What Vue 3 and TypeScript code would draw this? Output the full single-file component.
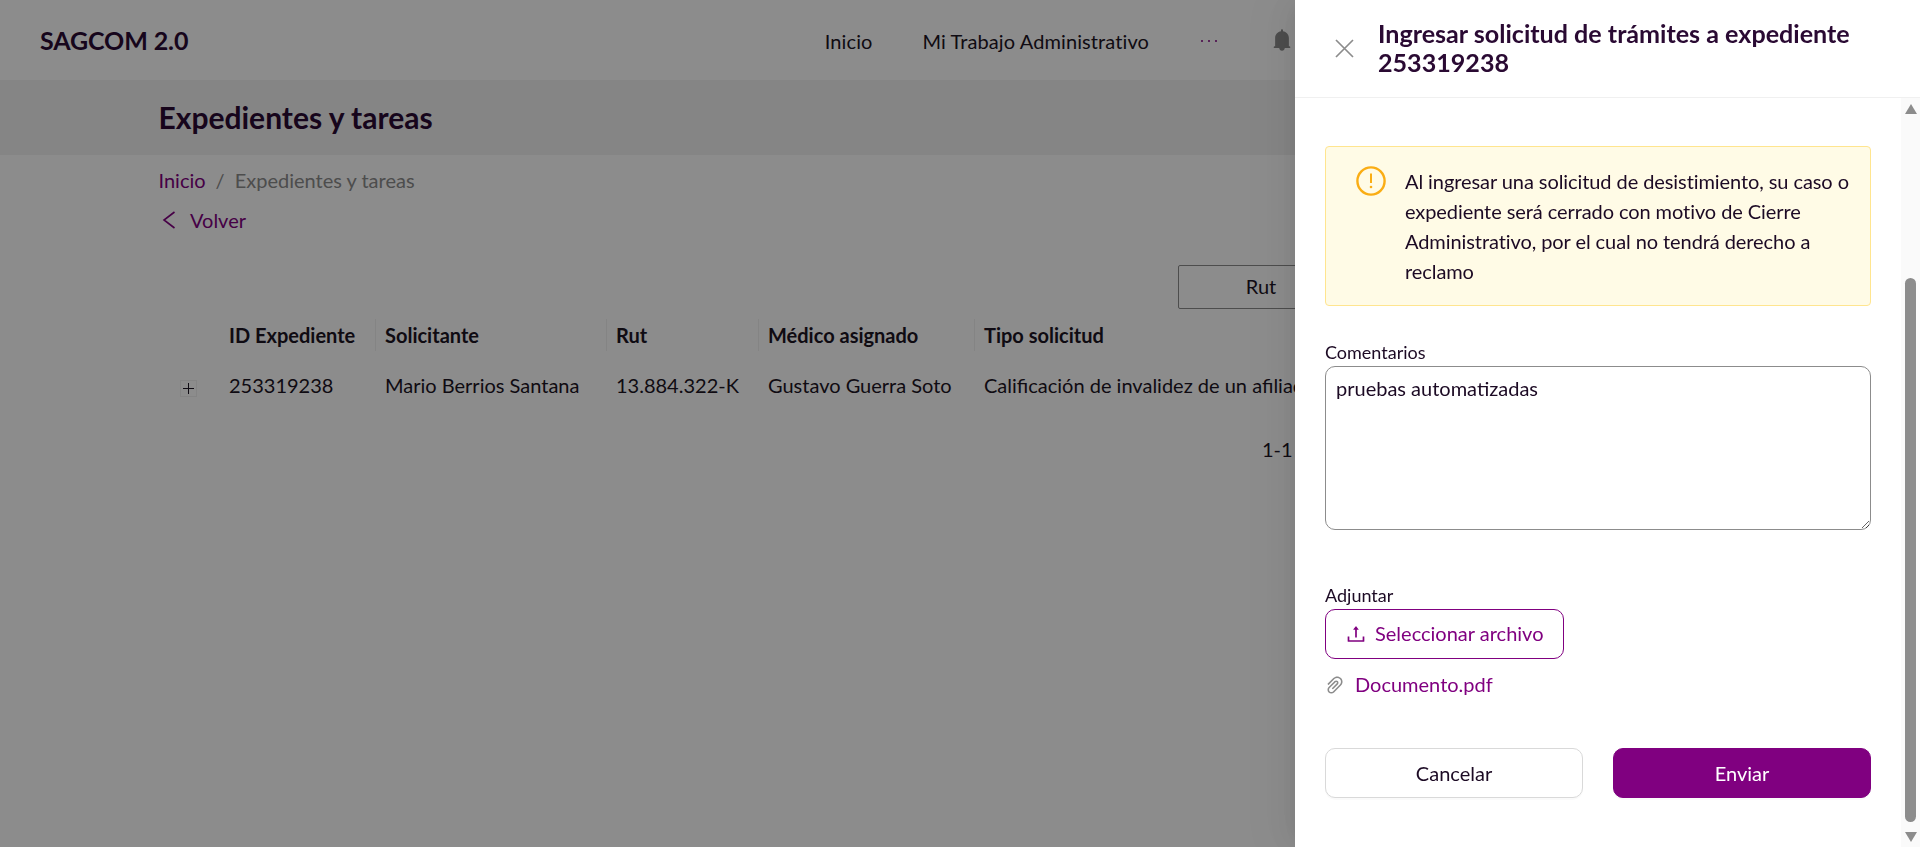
<script setup lang="ts">
const columns = [
  { key: 'id', title: 'ID Expediente', value: '253319238' },
  { key: 'name', title: 'Solicitante', value: 'Mario Berrios Santana' },
  { key: 'rut', title: 'Rut', value: '13.884.322-K' },
  { key: 'doctor', title: 'Médico asignado', value: 'Gustavo Guerra Soto' },
  { key: 'type', title: 'Tipo solicitud', value: 'Calificación de invalidez de un afiliado' },
]
const comment = 'pruebas automatizadas'
</script>

<template>
  <div class="page">
    <header class="navbar">
      <div class="logo">SAGCOM 2.0</div>
      <nav class="nav">
        <a class="nav-link">Inicio</a>
        <a class="nav-link">Mi Trabajo Administrativo</a>
        <span class="nav-more">
          <i></i><i></i><i></i>
        </span>
        <svg class="bell" viewBox="64 64 896 896" fill="currentColor">
          <path d="M816 768h-24V428c0-141.1-104.3-257.8-240-277.2V112c0-22.1-17.9-40-40-40s-40 17.9-40 40v38.8C336.3 170.2 232 286.9 232 428v340h-24c-17.7 0-32 14.3-32 32v32c0 4.4 3.6 8 8 8h216c0 61.8 50.2 112 112 112s112-50.2 112-112h216c4.4 0 8-3.6 8-8v-32c0-17.7-14.3-32-32-32z" />
        </svg>
      </nav>
    </header>

    <div class="subheader">
      <h1>Expedientes y tareas</h1>
    </div>

    <main class="content">
      <div class="breadcrumb">
        <a>Inicio</a>
        <span class="sep">/</span>
        <span class="current">Expedientes y tareas</span>
      </div>
      <a class="back">
        <svg viewBox="0 0 14 18" width="14" height="18" fill="none" stroke="currentColor" stroke-width="1.6">
          <path d="M12.5 1 2 9l10.5 8" />
        </svg>
        Volver
      </a>

      <div class="filters">
        <button class="filter-btn">Rut</button>
      </div>

      <div class="table">
        <div class="tr thead">
          <div class="th th-expand"></div>
          <div v-for="col in columns" :key="col.key" class="th">{{ col.title }}</div>
        </div>
        <div class="tr tbody">
          <div class="td td-expand">
            <span class="expand">
              <svg viewBox="0 0 15 15" width="15" height="15" fill="none" stroke="currentColor" stroke-width="1">
                <path d="M7.5 2v11M2 7.5h11" />
              </svg>
            </span>
          </div>
          <div v-for="col in columns" :key="col.key" class="td">{{ col.value }}</div>
        </div>
      </div>

      <div class="pagination">1-1</div>
    </main>
  </div>

  <div class="mask"></div>

  <aside class="drawer">
    <header class="drawer-header">
      <svg class="close" viewBox="0 0 19 19" fill="none" stroke="currentColor" stroke-width="1.7">
        <path d="M1 1l17 17M18 1 1 18" />
      </svg>
      <h2>Ingresar solicitud de trámites a expediente 253319238</h2>
    </header>

    <div class="drawer-body">
      <div class="form">
        <div class="alert">
          <svg class="alert-icon" viewBox="0 0 30 30" fill="none">
            <circle cx="15" cy="15" r="13.6" stroke="#faad14" stroke-width="2.4" />
            <path d="M15 7.5v9.5" stroke="#faad14" stroke-width="2" />
            <circle cx="15" cy="21" r="1.3" fill="#faad14" />
          </svg>
          <p>Al ingresar una solicitud de desistimiento, su caso o expediente será cerrado con motivo de Cierre Administrativo, por el cual no tendrá derecho a reclamo</p>
        </div>

        <label class="label label-comments">Comentarios</label>
        <textarea class="comments" :value="comment"></textarea>

        <label class="label label-attach">Adjuntar</label>
        <button class="upload">
          <svg viewBox="64 64 896 896" width="20" height="20" fill="currentColor">
            <path d="M400 317.7h73.9V656c0 4.4 3.6 8 8 8h60c4.4 0 8-3.6 8-8V317.7H624c6.7 0 10.4-7.7 6.3-12.9L518.3 163a8 8 0 00-12.6 0l-112 141.7c-4.1 5.3-.4 13 6.3 13zM878 626h-60c-4.4 0-8 3.6-8 8v154H214V634c0-4.4-3.6-8-8-8h-60c-4.4 0-8 3.6-8 8v198c0 17.7 14.3 32 32 32h684c17.7 0 32-14.3 32-32V634c0-4.4-3.6-8-8-8z" />
          </svg>
          Seleccionar archivo
        </button>

        <div class="file">
          <svg viewBox="64 64 896 896" width="20" height="20" fill="currentColor">
            <path d="M779.3 196.6c-94.2-94.2-247.6-94.2-341.7 0l-261 260.8c-1.7 1.7-2.6 4-2.6 6.4s.9 4.7 2.6 6.4l36.9 36.9a9 9 0 0012.7 0l261-260.8c32.4-32.4 75.5-50.2 121.3-50.2s88.9 17.8 121.2 50.2c32.4 32.4 50.2 75.5 50.2 121.2 0 45.8-17.8 88.8-50.2 121.2l-266 265.9-43.1 43.1c-40.3 40.3-105.8 40.3-146.1 0-19.5-19.5-30.2-45.4-30.2-73s10.7-53.5 30.2-73l263.9-263.8c6.7-6.6 15.5-10.3 24.9-10.3h.1c9.4 0 18.1 3.7 24.7 10.3 6.7 6.7 10.3 15.5 10.3 24.9 0 9.3-3.7 18.1-10.3 24.7L372.4 653c-1.7 1.7-2.6 4-2.6 6.4s.9 4.7 2.6 6.4l36.9 36.9a9 9 0 0012.7 0l215.6-215.6c19.9-19.9 30.8-46.3 30.8-74.4s-11-54.6-30.8-74.4c-41.1-41.1-107.9-41-149 0L463 364 224.8 602.1A172.22 172.22 0 00174 724.8c0 46.3 18.1 89.8 50.8 122.5 33.9 33.8 78.3 50.7 122.7 50.7 44.4 0 88.8-16.9 122.6-50.7l309.2-309C824.8 492.7 850 432 850 367.5c.1-64.6-25.1-125.3-70.7-170.9z" />
          </svg>
          <a>Documento.pdf</a>
        </div>

        <div class="actions">
          <button class="btn">Cancelar</button>
          <button class="btn btn-primary">Enviar</button>
        </div>
      </div>

      <div class="scrollbar">
        <span class="arrow arrow-up"></span>
        <span class="thumb"></span>
        <span class="arrow arrow-down"></span>
      </div>
    </div>
  </aside>
</template>

<style>
html, body { margin: 0; height: 100%; overflow: hidden; background: #fff; }
</style>

<style scoped>
* { box-sizing: border-box; }
.page, .drawer, button, textarea { font-family: Lato, "Liberation Sans", sans-serif; }
.page { height: 847px; background: #fff; color: #1a1a2e; overflow: hidden; }

.navbar { height: 80px; display: flex; align-items: center; padding: 0 629px 0 40px; }
.logo { font-size: 25px; font-weight: 700; color: #2a0a33; letter-spacing: -.1px; }
.nav { margin-left: auto; display: flex; align-items: center; font-size: 20px; color: #1c1424; }
.nav-link { margin-right: 50px; padding-top: 2px; letter-spacing: .1px; }
.nav-link + .nav-link { margin-right: 52px; }
.nav-more { display: flex; gap: 5px; width: 16px; margin-right: 54px; margin-top: 2px; }
.nav-more i { width: 2px; height: 2px; border-radius: 50%; background: #800080; flex: none; }
.bell { width: 22px; height: 22px; color: #8c8c8c; margin-right: -2px; margin-top: -1px; }

.subheader { height: 75px; background: #f2f2f2; padding: 0 0 2px 158.5px; display: flex; align-items: center; }
.subheader h1 { margin: 0; font-size: 30px; font-weight: 700; color: #2a0a33; }

.content { padding: 13px 0 0 159px; font-size: 20px; }
.breadcrumb { height: 24px; line-height: 24px; display: flex; color: #8c8c8c; margin-left: -.5px; }
.breadcrumb a { color: #800080; }
.sep { margin: 0 10px; }
.back { display: flex; align-items: center; gap: 14px; height: 24px; margin-top: 16px; color: #800080; padding-left: 3px; }

.filters { margin: 33px 0 0 1019px; }
.filter-btn { display: block; width: 166px; height: 44px; padding: 0 0 2px; background: #fff; border: 1px solid #8c8c8c; border-radius: 2px; font-size: 20px; color: #1c1424; }

.table { margin-top: 9px; }
.tr { display: grid; grid-template-columns: 60px 156px 231px 152px 216px 400px; }
.thead { height: 34px; align-items: center; font-weight: 700; color: #1c1424; }
.th { padding-left: 10px; height: 34px; line-height: 34px; position: relative; }
.th + .th:not(:nth-child(2))::before { content: ""; position: absolute; left: 0; top: 1px; bottom: 1px; width: 1px; background: #f0f0f0; }
.tbody { margin-top: 16px; height: 36px; align-items: center; color: #1c1424; }
.td { padding: 0 0 2px 10px; white-space: nowrap; }
.td-expand { padding: 0 0 0 21px; }
.expand { display: block; width: 17px; height: 17px; margin-top: 4px; border: 1px solid #f0f0f0; color: #1c1424; }
.expand svg { display: block; }
.pagination { margin: 33px 0 0 1103px; line-height: 24px; color: #1c1424; }

.mask { position: fixed; inset: 0; background: rgba(0, 0, 0, .45); }

.drawer {
  position: fixed; top: 0; right: 0; bottom: 0; width: 625px; background: #fff;
  display: flex; flex-direction: column; color: #1c0a24;
  box-shadow: -6px 0 16px -8px rgba(0,0,0,.08), -9px 0 28px 0 rgba(0,0,0,.05), -12px 0 48px 16px rgba(0,0,0,.03);
}
.drawer-header { height: 98px; flex: none; display: flex; align-items: center; padding: 0 40px 0 40px; border-bottom: 1px solid #f0f0f0; }
.close { width: 19px; height: 19px; color: #8c8c8c; flex: none; margin-right: 24px; }
.drawer-header h2 { margin: 0 0 2px; font-size: 25.1px; line-height: 29px; font-weight: 700; color: #2a0a33; }

.drawer-body { flex: 1; display: flex; min-height: 0; }
.form { width: 606px; padding: 48px 30px 0; display: flex; flex-direction: column; align-items: flex-start; font-size: 20px; }

.alert { width: 546px; height: 160px; display: flex; gap: 19px; padding: 19px 20px 16px 30px; background: #fffbe6; border: 1px solid #ffe58f; border-radius: 4px; line-height: 30px; color: #1c0a24; }
.alert-icon { width: 30px; height: 30px; flex: none; }
.alert p { margin: 0; letter-spacing: -.08px; }

.label { display: block; font-size: 18px; line-height: 20px; color: #1c0a24; }
.label-comments { margin-top: 36px; }
.label-attach { margin-top: 55px; }
.comments { display: block; width: 546px; height: 164px; margin-top: 4px; padding: 9px 10px; border: 1px solid #8c8c8c; border-radius: 10px; outline: none; resize: vertical; font-size: 20px; line-height: 24px; color: #1c0a24; background: #fff; }

.upload { display: flex; align-items: center; gap: 9px; width: 239px; height: 50px; margin-top: 4px; padding: 0 0 2px 20px; border: 1px solid #800080; border-radius: 10px; background: #fff; color: #800080; font-size: 20px; }
.upload svg { margin-top: 2px; }
.file { display: flex; align-items: center; gap: 10px; height: 24px; margin-top: 14px; padding-left: 0; color: #8c8c8c; }
.file a { color: #800080; padding-bottom: 2px; }

.actions { width: 546px; display: flex; justify-content: space-between; margin-top: 51px; }
.btn { width: 258px; height: 50px; border: 1px solid #d9d9d9; border-radius: 10px; background: #fff; color: #1c0a24; font-size: 20px; box-shadow: 0 2px 0 rgba(0,0,0,.02); }
.btn-primary { background: #800080; border-color: #800080; color: #fff; }

.scrollbar { width: 19px; background: #fafafa; display: flex; flex-direction: column; align-items: center; padding: 6px 0 5px; }
.arrow { width: 0; height: 0; border-left: 6.5px solid transparent; border-right: 6.5px solid transparent; flex: none; }
.arrow-up { border-bottom: 10px solid #8c8c8c; }
.arrow-down { border-top: 10px solid #8c8c8c; margin-top: 10px; }
.thumb { width: 11px; height: 545px; margin-top: 164px; border-radius: 6px; background: #8c8c8c; }
</style>
